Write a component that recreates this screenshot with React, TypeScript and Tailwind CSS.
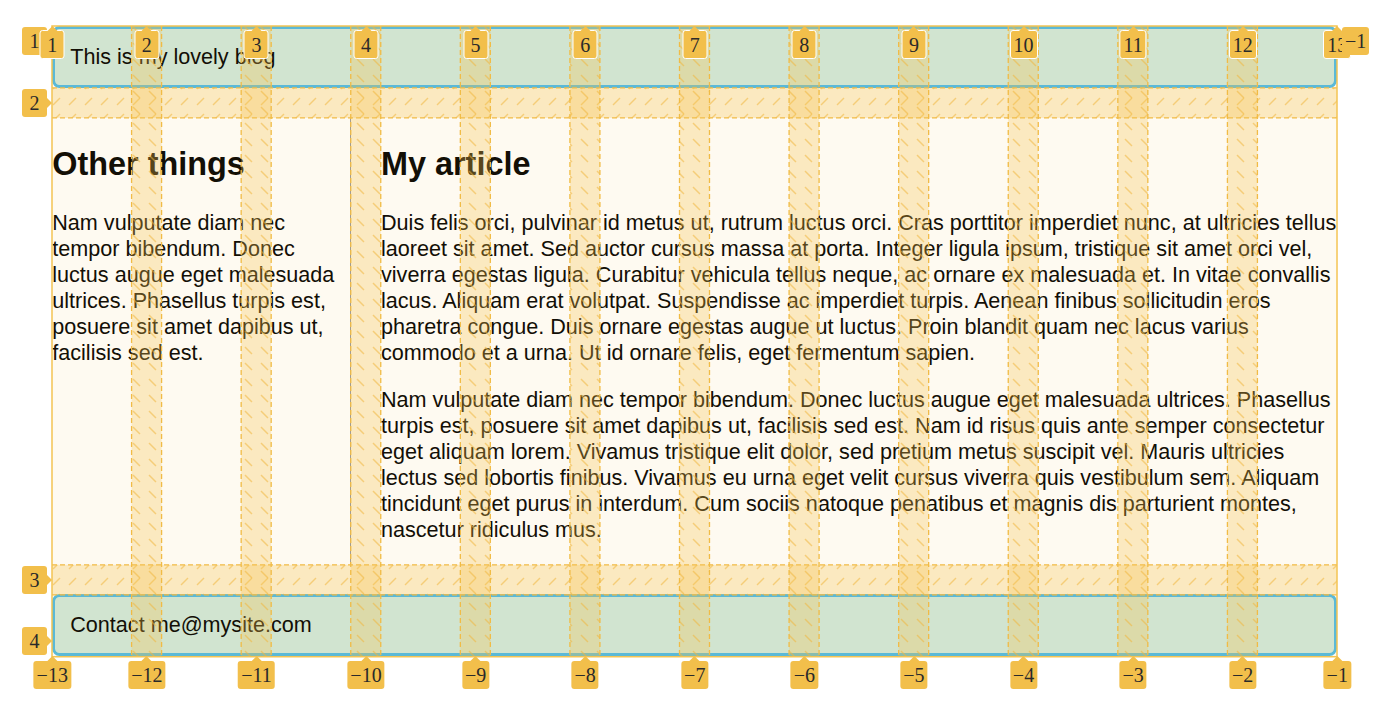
import React from "react";

// grid metrics (page px) – mirrors the grid below
const GRID_W = 1285;
const COL_GAP = 30;
const COL_W = (GRID_W - COL_GAP * 11) / 12;
const ROWS = [61.92, 446.9, 61.92];
const ROW_GAP = 30;
const GRID_H = ROWS.reduce((a, b) => a + b, 0) + ROW_GAP * 2;
const LEFT = 52.25;
const TOP = 25.75;

const colGapX = (i: number) => i * COL_W + (i - 1) * COL_GAP; // gap after column i
const rowGapY = [ROWS[0], ROWS[0] + ROW_GAP + ROWS[1]];

const colLineX = (n: number) => {
  if (n === 1) return 0;
  if (n === 13) return GRID_W;
  return colGapX(n - 1) + COL_GAP / 2;
};

const rowLineY = (n: number) => {
  if (n === 1) return 0;
  if (n === 4) return GRID_H;
  return rowGapY[n - 2] + ROW_GAP / 2;
};

const GridOverlay: React.FC = () => (
  <svg
    className="absolute left-0 top-0 pointer-events-none overflow-visible"
    width={GRID_W}
    height={GRID_H}
  >
    <defs>
      <pattern id="hatchRow" width="16" height="16" patternUnits="userSpaceOnUse">
        <line x1="1" y1="15" x2="8" y2="8" stroke="#f0b63e" strokeOpacity="0.55" strokeWidth="1.5" />
      </pattern>
      <pattern id="hatchCol" width="16" height="16" patternUnits="userSpaceOnUse">
        <line x1="1" y1="1" x2="8" y2="8" stroke="#f0b63e" strokeOpacity="0.55" strokeWidth="1.5" />
      </pattern>
    </defs>
    <rect x="0" y="0" width={GRID_W} height={GRID_H} fill="#f5c34f" fillOpacity="0.08" />
    {rowGapY.map((y) => (
      <g key={"r" + y}>
        <rect x="0" y={y} width={GRID_W} height={ROW_GAP} fill="#f5c34f" fillOpacity="0.3" />
        <rect x="0" y={y} width={GRID_W} height={ROW_GAP} fill="url(#hatchRow)" />
        <line x1="0" x2={GRID_W} y1={y} y2={y} stroke="#f1bb45" strokeWidth="1.3" strokeDasharray="5 3" />
        <line x1="0" x2={GRID_W} y1={y + ROW_GAP} y2={y + ROW_GAP} stroke="#f1bb45" strokeWidth="1.3" strokeDasharray="5 3" />
      </g>
    ))}
    {Array.from({ length: 11 }, (_, k) => colGapX(k + 1)).map((x) => (
      <g key={"c" + x}>
        <rect x={x} y="0" width={COL_GAP} height={GRID_H} fill="#f5c34f" fillOpacity="0.3" />
        <rect x={x} y="0" width={COL_GAP} height={GRID_H} fill="url(#hatchCol)" />
        <line x1={x} x2={x} y1="0" y2={GRID_H} stroke="#f1bb45" strokeWidth="1.3" strokeDasharray="5 3" />
        <line x1={x + COL_GAP} x2={x + COL_GAP} y1="0" y2={GRID_H} stroke="#f1bb45" strokeWidth="1.3" strokeDasharray="5 3" />
      </g>
    ))}
    <rect x="0" y="0" width={GRID_W} height={GRID_H} fill="none" stroke="#f4c453" strokeWidth="1.5" />
  </svg>
);

interface BadgeProps {
  label: string;
  left: number;
  top: number;
  arrow?: "up" | "right";
  outlined?: boolean;
  center?: boolean;
}

const Badge: React.FC<BadgeProps> = ({ label, left, top, arrow, outlined, center }) => (
  <div
    className={
      "absolute flex items-center justify-center " + (center ? "-translate-x-1/2" : "")
    }
    style={{ left, top }}
  >
    <div
      className={
        "relative min-w-[25px] h-[28px] px-[3px] rounded-[3px] bg-[#f2bf4b] flex items-center justify-center font-['Liberation_Serif',serif] text-[20px] leading-none text-[#2a2a2a] " +
        (outlined ? "border border-white h-[29px]" : "")
      }
    >
      {label}
      {arrow === "up" && (
        <span className="absolute -top-[5px] left-1/2 -translate-x-1/2 w-0 h-0 border-x-[5px] border-x-transparent border-b-[5px] border-b-[#f2bf4b]" />
      )}
      {arrow === "right" && (
        <span className="absolute -right-[5px] top-1/2 -translate-y-1/2 w-0 h-0 border-y-[5px] border-y-transparent border-l-[5px] border-l-[#f2bf4b]" />
      )}
    </div>
  </div>
);

const LineLabels: React.FC = () => {
  const rowTops = [27, 89, 566, 627];
  return (
    <>
      {[1, 2, 3, 4].map((n) => (
        <Badge
          key={"row" + n}
          label={String(n)}
          left={22}
          top={n === 1 || n === 4 ? rowTops[n - 1] : TOP + rowLineY(n) - 14}
          arrow="right"
        />
      ))}
      {Array.from({ length: 13 }, (_, k) => k + 1).map((n) => (
        <Badge
          key={"top" + n}
          label={String(n)}
          left={LEFT + colLineX(n)}
          top={30}
          arrow="up"
          outlined
          center
        />
      ))}
      {Array.from({ length: 13 }, (_, k) => k + 1).map((n) => (
        <Badge
          key={"bot" + n}
          label={"−" + (14 - n)}
          left={LEFT + colLineX(n)}
          top={661}
          arrow="up"
          center
        />
      ))}
      <Badge label="−1" left={1342} top={27} />
    </>
  );
};

const App: React.FC = () => {
  return (
    <div className="relative min-h-screen bg-white pt-[25.75px] font-['Liberation_Sans',Arial,sans-serif] text-[21.6px] leading-[1.2] text-black">
      <div className="relative ml-[52.25px] w-[1285px]">
        <div className="grid grid-cols-12 gap-[30px]">
          <header className="col-span-12 rounded-[7.5px] p-[15px] bg-[#cfe8dc] border-[3px] border-[#4fb9e3]">
            This is my lovely blog
          </header>

          <aside className="col-span-3 border-r-[1.5px] border-[#999]">
            <h2 className="my-[26.9px] text-[32.4px] font-bold leading-[1.2]">Other things</h2>
            <p className="my-[21.6px]">
              Nam vulputate diam nec tempor bibendum. Donec luctus augue eget malesuada
              ultrices. Phasellus turpis est, posuere sit amet dapibus ut, facilisis sed est.
            </p>
          </aside>

          <article className="col-span-9">
            <h2 className="my-[26.9px] text-[32.4px] font-bold leading-[1.2]">My article</h2>
            <p className="my-[21.6px]">
              Duis felis orci, pulvinar id metus ut, rutrum luctus orci. Cras porttitor
              imperdiet nunc, at ultricies tellus laoreet sit amet. Sed auctor cursus massa at
              porta. Integer ligula ipsum, tristique sit amet orci vel, viverra egestas ligula.
              Curabitur vehicula tellus neque, ac ornare ex malesuada et. In vitae convallis
              lacus. Aliquam erat volutpat. Suspendisse ac imperdiet turpis. Aenean finibus
              sollicitudin eros pharetra congue. Duis ornare egestas augue ut luctus. Proin
              blandit quam nec lacus varius commodo et a urna. Ut id ornare felis, eget
              fermentum sapien.
            </p>
            <p className="my-[21.6px]">
              Nam vulputate diam nec tempor bibendum. Donec luctus augue eget malesuada
              ultrices. Phasellus turpis est, posuere sit amet dapibus ut, facilisis sed est.
              Nam id risus quis ante semper consectetur eget aliquam lorem. Vivamus tristique
              elit dolor, sed pretium metus suscipit vel. Mauris ultricies lectus sed lobortis
              finibus. Vivamus eu urna eget velit cursus viverra quis vestibulum sem. Aliquam
              tincidunt eget purus in interdum. Cum sociis natoque penatibus et magnis dis
              parturient montes, nascetur ridiculus mus.
            </p>
          </article>

          <footer className="col-span-12 rounded-[7.5px] p-[15px] bg-[#cfe8dc] border-[3px] border-[#4fb9e3]">
            Contact me@mysite.com
          </footer>
        </div>
        <GridOverlay />
      </div>
      <LineLabels />
    </div>
  );
};

export default App;
